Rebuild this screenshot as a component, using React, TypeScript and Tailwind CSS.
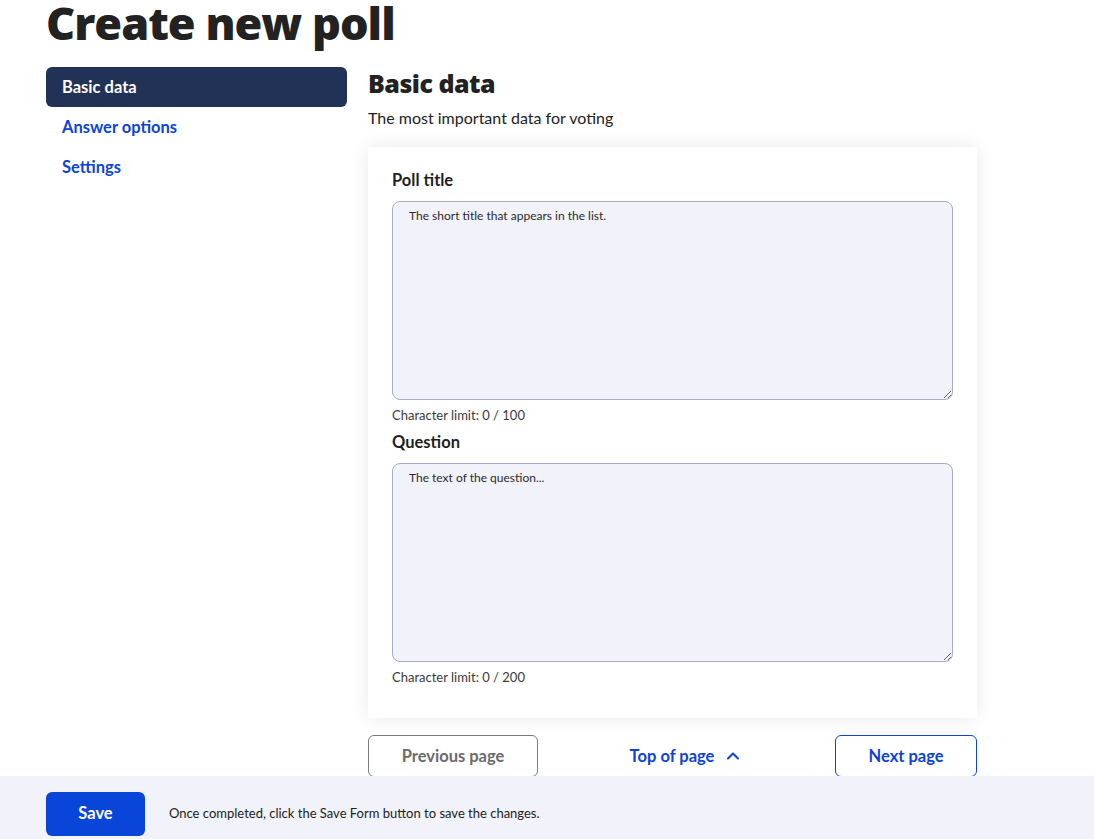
import React from 'react';
import { ChevronUp } from 'lucide-react';

const SECTIONS = ['Basic data', 'Answer options', 'Settings'];

const Field: React.FC<{ label: string; placeholder: string; limit: number }> = ({ label, placeholder, limit }) => (
  <div className="flex flex-col">
    <label className="text-[16.5px] font-bold text-[#1f1f1f] leading-6 mb-[9px]">{label}</label>
    <textarea
      placeholder={placeholder}
      className="h-[199px] w-full rounded-[8px] border border-[#a9aac8] bg-[#f2f2fb] px-4 py-[4px] text-[12px] leading-5 text-[#222] placeholder:text-[#2a2a2a] outline-none"
    />
    <p className="mt-[5px] text-[13px] leading-5 text-[#3a3a3a]">Character limit: 0 / {limit}</p>
  </div>
);

const App: React.FC = () => {
  return (
    <div className="min-h-screen bg-white font-['Lato',sans-serif] text-[#1f1f1f]">
      <div className="px-[46px] pb-[120px]">
        <h1 className="font-['Open_Sans',sans-serif] text-[45px] font-extrabold leading-[46px] tracking-[-1px] text-[#222]">
          Create new poll
        </h1>

        <div className="mt-[21px] flex gap-[21px]">
          {/* Navigation */}
          <nav className="w-[301px] shrink-0 flex flex-col">
            {SECTIONS.map((s, i) => (
              <a
                key={s}
                href="#"
                className={
                  i === 0
                    ? 'h-10 rounded-[6px] bg-[#223156] px-4 flex items-center text-[16.5px] font-bold text-white'
                    : 'h-10 px-4 flex items-center text-[16.5px] font-bold text-[#0c44d6]'
                }
              >
                {s}
              </a>
            ))}
          </nav>

          {/* Content */}
          <main className="w-[609px]">
            <h2 className="font-['Open_Sans',sans-serif] text-[25px] font-extrabold leading-8 tracking-[-0.5px] text-[#222]">
              Basic data
            </h2>
            <p className="mt-[7px] text-[16px] leading-6 text-[#222]">The most important data for voting</p>

            <div className="mt-[17px] bg-white px-6 pt-[21px] pb-[31px] shadow-[0_0_18px_rgba(0,0,0,0.09)] flex flex-col gap-[5px]">
              <Field label="Poll title" placeholder="The short title that appears in the list." limit={100} />
              <Field label="Question" placeholder="The text of the question..." limit={200} />
            </div>

            <div className="mt-[17px] flex items-center justify-between">
              <button className="h-[42px] w-[170px] rounded-[6px] border border-[#7a7a7a] bg-white text-[16.5px] font-bold text-[#6b6b6b]">
                Previous page
              </button>
              <button className="flex items-center gap-[9px] text-[16.5px] font-bold text-[#0c44d6]">
                Top of page
                <ChevronUp size={20} strokeWidth={2.5} />
              </button>
              <button className="h-[42px] w-[142px] rounded-[6px] border border-[#0c44d6] bg-white text-[16.5px] font-bold text-[#0c44d6]">
                Next page
              </button>
            </div>
          </main>
        </div>
      </div>

      {/* Footer bar */}
      <footer className="fixed bottom-0 left-0 right-0 h-[63px] bg-[#f1f2fa] px-[46px] flex items-center gap-6">
        <button className="mt-[12px] h-[44px] w-[99px] rounded-[6px] bg-[#0a45da] text-[16.5px] font-bold text-white">
          Save
        </button>
        <p className="mt-[12px] text-[13px] text-[#222]">Once completed, click the Save Form button to save the changes.</p>
      </footer>
    </div>
  );
};

export default App;
